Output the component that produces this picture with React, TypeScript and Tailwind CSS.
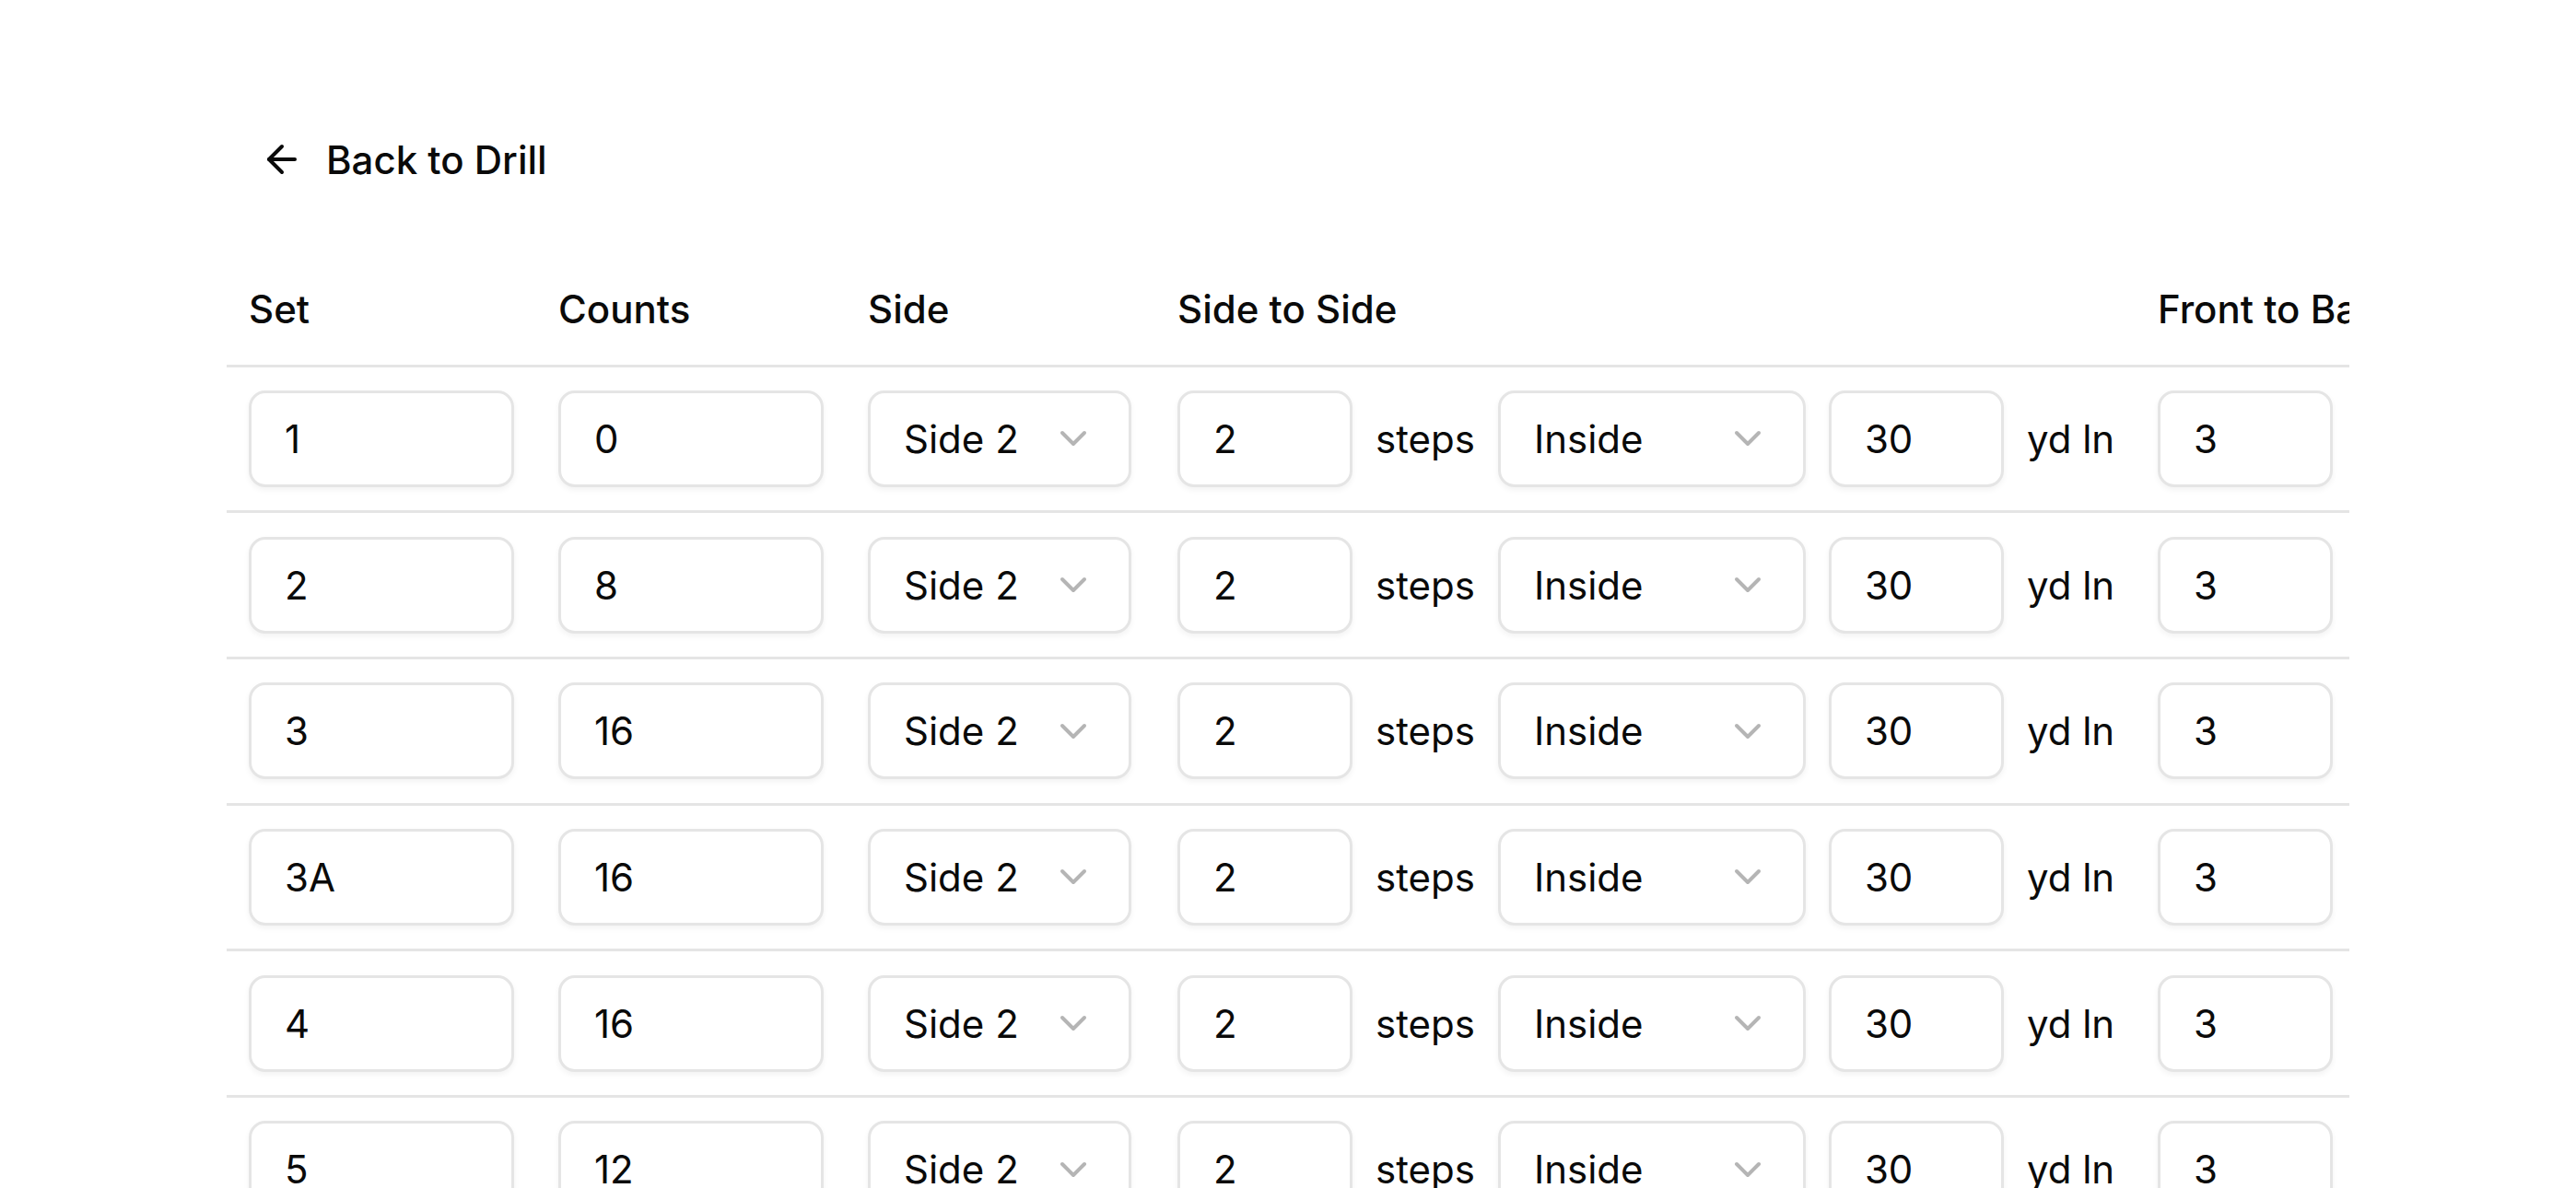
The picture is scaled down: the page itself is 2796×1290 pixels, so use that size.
import { ArrowLeft, ChevronDown } from "lucide-react";

const rows = [
  { set: "1", counts: "0" },
  { set: "2", counts: "8" },
  { set: "3", counts: "16" },
  { set: "3A", counts: "16" },
  { set: "4", counts: "16" },
  { set: "5", counts: "12" },
];

function Field({ value, w }: { value: string; w: string }) {
  return (
    <input
      readOnly
      value={value}
      className={`h-[105px] ${w} shrink-0 rounded-[18px] border-[3px] border-[#e5e5e5] bg-white px-[36px] text-[42px] leading-normal text-[#0a0a0a] shadow-[0_3px_6px_rgba(0,0,0,0.05)] outline-none`}
    />
  );
}

function SelectBox({ value, w }: { value: string; w: string }) {
  return (
    <div
      className={`flex h-[105px] ${w} shrink-0 items-center justify-between rounded-[18px] border-[3px] border-[#e5e5e5] bg-white px-[36px] text-[42px] text-[#0a0a0a] shadow-[0_3px_6px_rgba(0,0,0,0.05)]`}
    >
      <span>{value}</span>
      <ChevronDown className="size-[48px] text-[#b5b5b5]" strokeWidth={2} />
    </div>
  );
}

export default function App() {
  return (
    <div className="h-[1290px] overflow-hidden bg-white font-[Inter,sans-serif] text-[#0a0a0a]">
      <div className="flex flex-col px-[246px] pt-[119px]">
        <div className="flex">
          <button className="flex h-[108px] items-center gap-[24px] rounded-[18px] px-[36px] text-[42px] font-medium text-[#0a0a0a]">
            <ArrowLeft className="size-[48px]" strokeWidth={2} />
            <span>Back to Drill</span>
          </button>
        </div>
        <div className="mt-[48.5px] overflow-hidden">
          <div className="flex w-max min-w-full flex-col">
            <div className="flex h-[123px] items-center border-b-[3px] border-[#e5e5e5] text-[42px] font-medium">
              <div className="w-[336px] shrink-0 px-[24px]">Set</div>
              <div className="w-[336px] shrink-0 px-[24px]">Counts</div>
              <div className="w-[336px] shrink-0 px-[24px]">Side</div>
              <div className="w-[1064px] shrink-0 px-[24px]">Side to Side</div>
              <div className="w-[1100px] shrink-0 px-[24px]">Front to Back</div>
            </div>
            {rows.map((r) => (
              <div
                key={r.set}
                className="flex h-[158.7px] items-center border-b-[3px] border-[#e5e5e5] text-[42px]"
              >
                <div className="w-[336px] shrink-0 px-[24px]">
                  <Field value={r.set} w="w-[288px]" />
                </div>
                <div className="w-[336px] shrink-0 px-[24px]">
                  <Field value={r.counts} w="w-[288px]" />
                </div>
                <div className="w-[336px] shrink-0 px-[24px]">
                  <SelectBox value="Side 2" w="w-[286px]" />
                </div>
                <div className="flex w-[1064px] shrink-0 items-center gap-[25px] px-[24px]">
                  <Field value="2" w="w-[190px]" />
                  <span className="shrink-0">steps</span>
                  <SelectBox value="Inside" w="w-[334px]" />
                  <Field value="30" w="w-[190px]" />
                  <span className="shrink-0">yd ln</span>
                </div>
                <div className="flex w-[1100px] shrink-0 items-center gap-[25px] px-[24px]">
                  <Field value="3" w="w-[190px]" />
                  <span className="shrink-0">steps</span>
                  <SelectBox value="In Front Of" w="w-[334px]" />
                  <span className="shrink-0">Front Sideline</span>
                </div>
              </div>
            ))}
          </div>
        </div>
      </div>
    </div>
  );
}
